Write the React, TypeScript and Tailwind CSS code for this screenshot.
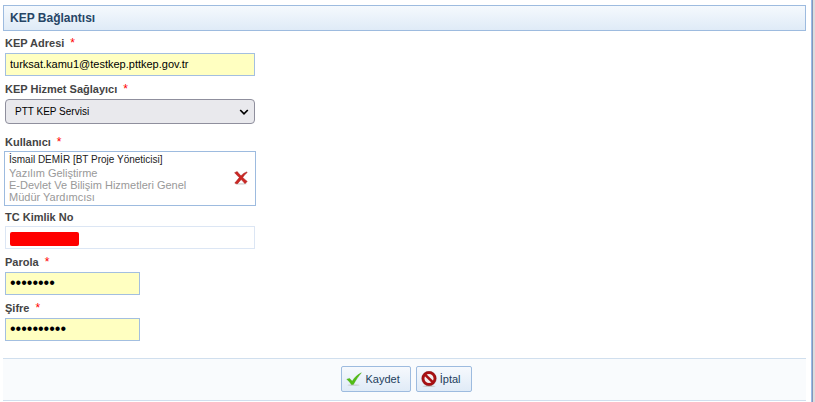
import type { InputHTMLAttributes, ReactNode } from 'react'

interface LabelProps {
  htmlFor?: string
  required?: boolean
  children: ReactNode
}

function Label({ htmlFor, required, children }: LabelProps) {
  return (
    <label htmlFor={htmlFor} className="block text-[11px] leading-[14px] font-bold text-[#444444]">
      {children}
      {required && <span className="ml-1.5 text-xs leading-[14px] font-normal text-[#ff0000]">*</span>}
    </label>
  )
}

function TextInput({ className = '', ...rest }: InputHTMLAttributes<HTMLInputElement>) {
  return (
    <input
      {...rest}
      className={`block h-[23px] rounded-none border border-[#a3bfe0] bg-[#ffffc1] px-1 pb-0.5 text-black outline-none ${className}`}
    />
  )
}

function DeleteIcon() {
  return (
    <svg width="14" height="14" viewBox="0 0 14 14" aria-hidden="true">
      <ellipse cx="7" cy="12.9" rx="6" ry="0.8" fill="#dddddd" />
      <path
        d="M0.6 1.7 3.2 0.6C4.4 2.2 5.6 3.6 7 4.8 8.6 3.1 10.4 1.7 12.8 0.9L13.2 1.5C11.4 2.8 9.9 4.4 8.7 6.4 10 7.7 11.6 9.1 13.2 10.4L11 12.7C9.8 11.3 8.5 9.8 7.2 8.5 5.9 10 4.6 11.5 3.2 13L0.8 12.1C2.4 10.2 3.7 8.4 5.3 6.6 3.8 5 2.2 3.4 0.6 1.7Z"
        fill="#cc2724"
        stroke="#a31f1d"
        strokeWidth="0.5"
      />
    </svg>
  )
}

function CheckIcon() {
  return (
    <svg width="16" height="16" viewBox="0 0 16 16" aria-hidden="true">
      <ellipse cx="7.5" cy="14.2" rx="6" ry="0.9" fill="#ccd3d6" />
      <path
        d="M0.8 8.2 3.6 7.4 6.2 10.2C8.6 6.4 11.4 3.8 15.3 1.8 12.6 5 9.9 9 7.4 13.4L5.4 13.6C4.2 11.6 2.7 9.8 0.8 8.2Z"
        fill="#52bd14"
        stroke="#3fa30c"
        strokeWidth="0.4"
      />
    </svg>
  )
}

function CancelIcon() {
  return (
    <svg width="16" height="16" viewBox="0 0 16 16" aria-hidden="true">
      <ellipse cx="8" cy="15.2" rx="6.5" ry="0.7" fill="#c9c9c9" />
      <circle cx="8" cy="7.5" r="5.9" fill="#f3eeee" stroke="#a90f12" strokeWidth="2.7" />
      <path d="M4 3.6 12 11.4" stroke="#a90f12" strokeWidth="2.7" />
      <circle cx="8" cy="7.5" r="7.2" fill="none" stroke="#7d0a0c" strokeWidth="0.5" />
    </svg>
  )
}

function ActionButton({ icon, children, type = 'button' }: { icon: ReactNode; children: ReactNode; type?: 'button' | 'submit' }) {
  return (
    <button
      type={type}
      className="flex h-[26px] items-center gap-[3px] rounded-xs border border-[#9dbbdf] bg-linear-to-b from-[#f6f9fd] to-[#e0ebf7] pr-[10px] pl-1 text-[11px] text-[#223d5c]"
    >
      {icon}
      {children}
    </button>
  )
}

export default function App() {
  return (
    <div className="flex min-h-screen bg-white font-['Liberation_Sans',Arial,sans-serif] text-[11px]">
      <form className="min-w-0 flex-1 pt-[5px] pr-[5px] pl-[3px]" onSubmit={(e) => e.preventDefault()}>
        <h2 className="flex h-[26px] items-center border border-[#9dbbdf] bg-linear-to-b from-[#f5f9fd] to-[#dfebf7] px-1.5 text-xs font-bold text-[#264566]">
          KEP Bağlantısı
        </h2>

        <div className="px-0.5">
          <div className="flex flex-col gap-[3px] pt-[5px]">
            <Label htmlFor="kep-adresi" required>KEP Adresi</Label>
            <TextInput id="kep-adresi" type="text" defaultValue="turksat.kamu1@testkep.pttkep.gov.tr" className="w-[250px]" />
          </div>

          <div className="flex flex-col gap-[3px] pt-1.5">
            <Label htmlFor="saglayici" required>KEP Hizmet Sağlayıcı</Label>
            <div className="relative w-[250px]">
              <select
                id="saglayici"
                className="block h-[25px] w-full appearance-none rounded border border-[#8f8f9d] bg-[#e9e9ed] px-[9px] text-[10px] text-black"
              >
                <option>PTT KEP Servisi</option>
              </select>
              <svg className="pointer-events-none absolute top-2 right-1.5" width="10" height="10" viewBox="0 0 10 10" aria-hidden="true">
                <path d="M1.2 3 5 6.8 8.8 3" fill="none" stroke="#000000" strokeWidth="1.7" />
              </svg>
            </div>
          </div>

          <div className="flex flex-col gap-0.5 pt-[11px]">
            <Label required>Kullanıcı</Label>
            <div className="-ml-px flex h-[55px] w-[252px] items-center justify-between border border-[#9dbbdf] pr-[7px] pb-0.5 pl-1">
              <div>
                <p className="text-[10px] leading-[14px] text-[#222222]">İsmail DEMİR [BT Proje Yöneticisi]</p>
                <p className="w-[200px] text-[11px] leading-3 text-[#999999]">
                  Yazılım Geliştirme
                  <br />
                  E-Devlet Ve Bilişim Hizmetleri Genel
                  <br />
                  Müdür Yardımcısı
                </p>
              </div>
              <button type="button" aria-label="Kullanıcıyı kaldır">
                <DeleteIcon />
              </button>
            </div>
          </div>

          <div className="flex flex-col gap-0.5 pt-1">
            <Label htmlFor="tc-kimlik">TC Kimlik No</Label>
            <div className="relative w-[250px]">
              <input id="tc-kimlik" type="text" readOnly className="block h-[23px] w-full border border-[#dce6f4] bg-white px-1 outline-none" />
              <span className="absolute top-1.5 left-[5px] h-[14px] w-[69px] rounded-xs bg-[#ff0000]" />
            </div>
          </div>

          <div className="flex flex-col gap-[3px] pt-1.5">
            <Label htmlFor="parola" required>Parola</Label>
            <TextInput id="parola" type="password" defaultValue="kepkamu1" className="w-[135px] text-base" />
          </div>

          <div className="flex flex-col gap-[3px] pt-1.5">
            <Label htmlFor="sifre" required>Şifre</Label>
            <TextInput id="sifre" type="password" defaultValue="kepkamu123" className="w-[135px] text-base" />
          </div>
        </div>

        <div className="mt-[17px] flex h-[43px] items-start justify-center gap-[5px] border-y border-[#d0dfee] bg-[#f9fbfd] pt-[7px] pl-1">
          <ActionButton type="submit" icon={<CheckIcon />}>Kaydet</ActionButton>
          <ActionButton icon={<CancelIcon />}>İptal</ActionButton>
        </div>
      </form>
      <div className="flex w-1 bg-[#dcdcdc]">
        <div className="w-px bg-[#99bbe8]" />
        <div className="w-px bg-[#8496b8]" />
      </div>
    </div>
  )
}
